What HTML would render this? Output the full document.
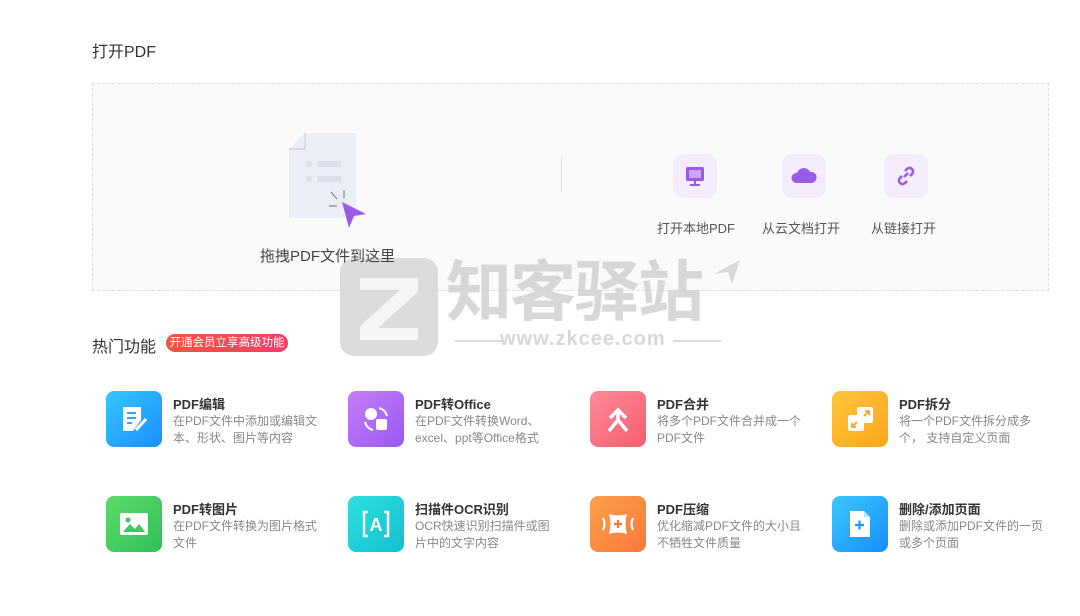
<!DOCTYPE html>
<html><head><meta charset="utf-8"><style>
*{margin:0;padding:0;box-sizing:border-box}
body{width:1080px;height:616px;background:#fff;font-family:"Liberation Sans","Noto Sans CJK SC",sans-serif;position:relative;overflow:hidden;color:#333}
.a{position:absolute}
.t{font-size:16px;color:#333}
.box{left:92px;top:83px;width:957px;height:208px;border:1px dashed #ddd;background:#fafafa}
.ic{width:44px;height:44px;border-radius:10px;background:#f3ecfd;display:flex;align-items:center;justify-content:center}
.lab{font-size:13px;color:#555;white-space:nowrap}
.fi{width:56px;height:56px;border-radius:8px;display:flex;align-items:center;justify-content:center}
.ft{font-size:13px;font-weight:bold;color:#333;white-space:nowrap}
.fd{font-size:12px;color:#888;line-height:17px;width:145px}
.wm{color:#d4d4d4;font-weight:bold}
#w{opacity:0.9}
</style></head><body>
<div class="a t" style="left:92px;top:38px">打开PDF</div>
<div class="a box"></div>
<div id="w">
<div class="a" style="left:340px;top:258px;width:98px;height:98px;border-radius:14px;background:#d9d9d9"></div>
<svg class="a" style="left:352px;top:270px" width="74" height="74"><path d="M8 8H66V22L26 58H66V70H8V56L48 20H8Z" fill="#f5f5f5"/></svg>
<div class="a wm" style="left:446px;top:252px;font-size:66px;letter-spacing:-2px;line-height:80px">知客驿站</div>
<svg class="a" style="left:712px;top:258px" width="30" height="30"><path d="M28 2L2 16L16 14L20 26Z" fill="#d6d6d6"/></svg>
<div class="a" style="left:455px;top:340px;width:48px;height:2px;background:#d6d6d6"></div>
<div class="a wm" style="left:500px;top:328px;font-size:20px;letter-spacing:1px">www.zkcee.com</div>
<div class="a" style="left:673px;top:340px;width:48px;height:2px;background:#d6d6d6"></div>
</div>
<svg class="a" style="left:286px;top:130px" width="84" height="100">
<path d="M19 3H70V88H3V19Z" fill="#eceef7"/>
<path d="M19 3V19H3" fill="none" stroke="#ccc" stroke-width="1.2"/>
<circle cx="23" cy="34" r="3" fill="#dde0ea"/><rect x="31" y="31" width="24" height="6" fill="#dde0ea"/>
<circle cx="23" cy="49" r="3" fill="#dde0ea"/><rect x="31" y="46" width="24" height="6" fill="#dde0ea"/>
<path d="M45 62L51 69M58 60V68M43 76H51" stroke="#888" stroke-width="1.2"/>
<path d="M56 72L80 84L68 86L63 98Z" fill="#9a5ce8"/>
</svg>
<div class="a" style="left:260px;top:245px;font-size:15px;color:#444">拖拽PDF文件到这里</div>
<div class="a" style="left:561px;top:158px;width:1px;height:34px;background:#ddd"></div>
<div class="a ic" style="left:673px;top:154px"><svg width="22" height="22"><rect x="2" y="2" width="18" height="14" rx="1.5" fill="#9a5ce8"/><rect x="5" y="5" width="12" height="8" fill="#c9a5f5"/><rect x="10" y="16" width="2" height="3" fill="#9a5ce8"/><rect x="6" y="19" width="10" height="2" fill="#9a5ce8"/></svg></div>
<div class="a ic" style="left:782px;top:154px"><svg width="26" height="22"><path d="M5 18A5 5 0 0 1 6 8A7 7 0 0 1 19 7A5.5 5.5 0 0 1 21 18Z" fill="#9a5ce8"/></svg></div>
<div class="a ic" style="left:884px;top:154px"><svg width="22" height="22" fill="none" stroke="#9a5ce8" stroke-width="2.6"><path d="M9 12L13 8M10 6L12 4A3 3 0 0 1 17 9L15 11M12 16L10 18A3 3 0 0 1 5 13L7 11"/></svg></div>
<div class="a lab" style="left:657px;top:218px">打开本地PDF</div>
<div class="a lab" style="left:762px;top:218px">从云文档打开</div>
<div class="a lab" style="left:871px;top:218px">从链接打开</div>

<div class="a t" style="left:92px;top:333px">热门功能</div>
<div class="a" style="left:166px;top:334px;width:122px;height:18px;border-radius:9px;background:linear-gradient(90deg,#f5553c,#f73c6a);color:#fff;font-size:11.5px;line-height:18px;text-align:center">开通会员立享高级功能</div>

<div class="a fi" style="left:106px;top:391px;background:linear-gradient(135deg,#36c6ff,#1890ff)"><svg width="30" height="30"><path d="M4 3H22V16L14 27H4Z" fill="#fff"/><path d="M8 9H17M8 14H17M8 19H13" stroke="#2ea8ff" stroke-width="2"/><path d="M17 26L27 15" stroke="#fff" stroke-width="3"/></svg></div>
<div class="a ft" style="left:173px;top:394px">PDF编辑</div>
<div class="a fd" style="left:173px;top:413px">在PDF文件中添加或编辑文本、形状、图片等内容</div>

<div class="a fi" style="left:348px;top:391px;background:linear-gradient(135deg,#c47cf8,#9b59f3)"><svg width="30" height="30" fill="none" stroke="#fff" stroke-width="2"><circle cx="10" cy="10" r="5" fill="#fff"/><rect x="16" y="16" width="9" height="9" rx="1" fill="#fff"/><path d="M18 4A11 11 0 0 1 26 12M4 18A11 11 0 0 0 12 26"/></svg></div>
<div class="a ft" style="left:415px;top:394px">PDF转Office</div>
<div class="a fd" style="left:415px;top:413px">在PDF文件转换Word、excel、ppt等Office格式</div>

<div class="a fi" style="left:590px;top:391px;background:linear-gradient(135deg,#ff8a9a,#f45e6e)"><svg width="30" height="30" fill="none" stroke="#fff" stroke-width="3.5"><path d="M7 14L15 6L23 14M15 8V16M6 27L15 16L24 27"/></svg></div>
<div class="a ft" style="left:657px;top:394px">PDF合并</div>
<div class="a fd" style="left:657px;top:413px">将多个PDF文件合并成一个PDF文件</div>

<div class="a fi" style="left:832px;top:391px;background:linear-gradient(135deg,#ffc53d,#faa61a)"><svg width="30" height="30"><rect x="3" y="11" width="16" height="16" rx="2" fill="#fff"/><rect x="12" y="3" width="16" height="16" rx="2" fill="#fff"/><path d="M7 23L12 18M7 19V23H11M24 7L19 12M24 11V7H20" stroke="#faa61a" stroke-width="1.8" fill="none"/></svg></div>
<div class="a ft" style="left:899px;top:394px">PDF拆分</div>
<div class="a fd" style="left:899px;top:413px">将一个PDF文件拆分成多个， 支持自定义页面</div>

<div class="a fi" style="left:106px;top:496px;background:linear-gradient(135deg,#5ddb6a,#2fbf5a)"><svg width="34" height="30"><rect x="3" y="4" width="28" height="22" rx="2" fill="#fff"/><circle cx="11" cy="11" r="2.5" fill="#3cc861"/><path d="M6 23L13 15L18 20L22 15L28 23Z" fill="#3cc861"/></svg></div>
<div class="a ft" style="left:173px;top:499px">PDF转图片</div>
<div class="a fd" style="left:173px;top:518px">在PDF文件转换为图片格式文件</div>

<div class="a fi" style="left:348px;top:496px;background:linear-gradient(135deg,#2ee0e0,#12bfd0)"><svg width="34" height="34" fill="none" stroke="#fff" stroke-width="2.5"><path d="M9 5H5V29H9M25 5H29V29H25"/><text x="17" y="24" text-anchor="middle" fill="#fff" stroke="none" font-size="18" font-weight="bold" font-family="Liberation Sans">A</text></svg></div>
<div class="a ft" style="left:415px;top:499px">扫描件OCR识别</div>
<div class="a fd" style="left:415px;top:518px">OCR快速识别扫描件或图片中的文字内容</div>

<div class="a fi" style="left:590px;top:496px;background:linear-gradient(135deg,#ffa04a,#f7793a)"><svg width="40" height="30"><path d="M11 5Q20 8 29 5Q26 15 29 25Q20 22 11 25Q14 15 11 5Z" fill="#fff"/><path d="M16 15H24M20 11V19" stroke="#f7793a" stroke-width="2.2"/><path d="M5 9Q8 15 5 21M35 9Q32 15 35 21" stroke="#fff" stroke-width="2.2" fill="none"/></svg></div>
<div class="a ft" style="left:657px;top:499px">PDF压缩</div>
<div class="a fd" style="left:657px;top:518px">优化缩减PDF文件的大小且不牺牲文件质量</div>

<div class="a fi" style="left:832px;top:496px;background:linear-gradient(135deg,#3ac8ff,#168ef8)"><svg width="30" height="32"><path d="M5 3H19L25 9V29H5Z" fill="#fff"/><path d="M19 3V9H25Z" fill="#bfe3ff"/><path d="M10 17H19M14.5 12.5V21.5" stroke="#1a9cff" stroke-width="2.2"/></svg></div>
<div class="a ft" style="left:899px;top:499px">删除/添加页面</div>
<div class="a fd" style="left:899px;top:518px">删除或添加PDF文件的一页或多个页面</div>
</body></html>
